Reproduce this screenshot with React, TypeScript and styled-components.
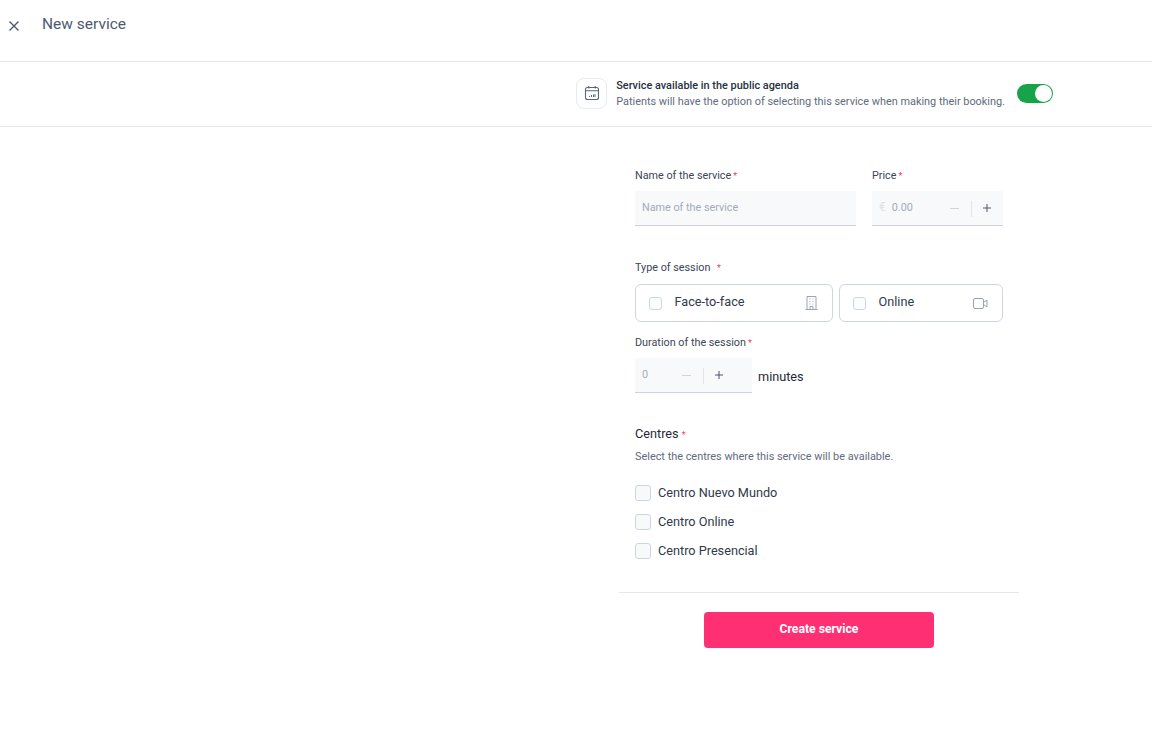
import React from "react";
import styled, { createGlobalStyle } from "styled-components";

const Global = createGlobalStyle`
  html, body { margin: 0; padding: 0; background: #fff; }
  body { font-family: Roboto, "Liberation Sans", sans-serif; color: #1f2937; }
`;

const Page = styled.div`
  width: 1152px;
  height: 732px;
  overflow: hidden;
  display: flex;
  flex-direction: column;
`;

const Header = styled.header`
  height: 62px;
  box-sizing: border-box;
  border-bottom: 1px solid #e3e6ef;
  display: flex;
  align-items: flex-start;
  padding: 14px 0 0 8px;
  gap: 22px;
`;

const CloseButton = styled.span`
  display: flex;
  width: 12px;
  height: 12px;
  margin-top: 6px;
  color: #4a5568;
`;

const Title = styled.h1`
  margin: 0;
  font-size: 15.5px;
  line-height: 20px;
  font-weight: 400;
  color: #4c5a70;
`;

const AgendaBar = styled.section`
  height: 65px;
  box-sizing: border-box;
  border-bottom: 1px solid #e2e6ee;
  padding: 0 99px 2px 0;
  display: flex;
  align-items: center;
  justify-content: flex-end;
`;

const IconTile = styled.div`
  width: 31px;
  height: 31px;
  box-sizing: border-box;
  border: 1px solid #e6eaf2;
  border-radius: 8px;
  display: flex;
  align-items: center;
  justify-content: center;
  color: #5a6578;
  margin-right: 9px;
`;

const AgendaText = styled.div`
  display: flex;
  flex-direction: column;
  gap: 1px;
  margin-right: 12px;
`;

const AgendaTitle = styled.div`
  font-size: 10.9px;
  line-height: 15px;
  font-weight: 500;
  color: #27303f;
`;

const AgendaHint = styled.div`
  font-size: 10.9px;
  line-height: 15px;
  color: #5f6b7e;
`;

const Toggle = styled.div`
  width: 36px;
  height: 19px;
  border-radius: 10px;
  background: #16a34a;
  display: flex;
  align-items: center;
  justify-content: flex-end;
  padding-right: 1px;
  box-sizing: border-box;
`;

const Knob = styled.span`
  width: 17px;
  height: 17px;
  border-radius: 50%;
  background: #fff;
`;

const Main = styled.main`
  display: flex;
  justify-content: flex-start;
  padding-left: 619px;
`;

const Form = styled.form`
  width: 400px;
  display: flex;
  flex-direction: column;
  padding-top: 41px;
`;

const Section = styled.div<{ $mt?: number }>`
  padding: 0 16px;
  margin-top: ${(p) => p.$mt ?? 0}px;
`;

const Row = styled.div<{ $gap: number }>`
  display: flex;
  gap: ${(p) => p.$gap}px;
`;

const Field = styled.div<{ $w: number }>`
  width: ${(p) => p.$w}px;
  display: flex;
  flex-direction: column;
`;

const Label = styled.label<{ $mb: number }>`
  font-size: 10.8px;
  line-height: 16px;
  color: #3b4657;
  margin-bottom: ${(p) => p.$mb}px;
  display: block;
`;

const Star = styled.span<{ $ml?: number }>`
  color: #f0405f;
  font-size: 9px;
  margin-left: ${(p) => p.$ml ?? 2}px;
`;

const InputShell = styled.div<{ $w?: number }>`
  height: 35px;
  width: ${(p) => (p.$w ? `${p.$w}px` : "auto")};
  box-sizing: border-box;
  background: #f8f9fb;
  border-bottom: 1px solid #cdd2dd;
  display: flex;
  align-items: center;
  font-size: 10.8px;
  color: #a3abb9;
  padding-left: 7px;
  padding-bottom: 2px;
`;

const Euro = styled.span`
  color: #dde2ea;
  margin-right: 6px;
  font-size: 12px;
`;

const Value = styled.span`
  flex: 1;
`;

const StepMinus = styled.span`
  width: 9px;
  height: 1px;
  background: #cfd5df;
  margin: 2px 12px 0 0;
`;

const StepDivider = styled.span`
  width: 1px;
  height: 16px;
  background: #e1e5ec;
  margin: 3px 11px 0 0;
`;

const StepPlus = styled.span<{ $mr: number }>`
  display: flex;
  color: #4a5568;
  margin: 2px ${(p) => p.$mr}px 0 0;
`;

const TypeCard = styled.div<{ $w: number }>`
  width: ${(p) => p.$w}px;
  height: 38px;
  box-sizing: border-box;
  border: 1px solid #cdd5e3;
  border-radius: 6px;
  display: flex;
  align-items: center;
  padding: 0 14px 0 13px;
`;

const SmallCheck = styled.span`
  width: 13px;
  height: 13px;
  box-sizing: border-box;
  border: 1px solid #cdd5e3;
  border-radius: 3px;
  background: #fbfcfd;
  margin-right: 12.5px;
  margin-top: 1px;
`;

const TypeName = styled.span`
  flex: 1;
  font-size: 12.7px;
  line-height: 16px;
  color: #2f3a4a;
  margin-top: -2px;
`;

const TypeIcon = styled.span`
  display: flex;
  color: #9aa3b3;
`;

const DurationRow = styled.div`
  display: flex;
  align-items: flex-end;
  gap: 6px;
`;

const Minutes = styled.span`
  font-size: 12.7px;
  line-height: 16px;
  color: #1f2937;
  margin-bottom: 8px;
`;

const CentresTitle = styled.h2`
  margin: 0;
  font-size: 12.7px;
  line-height: 18px;
  font-weight: 400;
  color: #1f2937;
`;

const CentresHint = styled.p`
  margin: 5px 0 0;
  font-size: 10.9px;
  line-height: 16px;
  color: #5f6b7e;
`;

const CheckList = styled.div`
  display: flex;
  flex-direction: column;
  gap: 13px;
  margin-top: 20px;
`;

const CheckRow = styled.div`
  display: flex;
  align-items: center;
  gap: 7px;
  height: 16px;
`;

const Check = styled.span`
  width: 16px;
  height: 16px;
  box-sizing: border-box;
  border: 1px solid #cdd5e3;
  border-radius: 3px;
  background: #f8f9fb;
`;

const CheckText = styled.span`
  font-size: 12.7px;
  line-height: 16px;
  color: #2f3a4a;
`;

const Footer = styled.div`
  margin-top: 33px;
  border-top: 1px solid #e2e6ee;
  padding-top: 19px;
  display: flex;
  justify-content: center;
`;

const Submit = styled.button`
  width: 230px;
  height: 36px;
  border: none;
  border-radius: 4px;
  background: #ff2f73;
  color: #fff;
  font-family: inherit;
  font-size: 12.2px;
  font-weight: 700;
  padding: 0 0 2px;
`;

const Plus = () => (
  <svg width="8" height="8" viewBox="0 0 8 8" fill="none" stroke="currentColor" strokeWidth="1">
    <path d="M4 0v8M0 4h8" />
  </svg>
);

const CalendarIcon = () => (
  <svg width="16" height="16" viewBox="0 0 16 16" fill="none" stroke="currentColor" strokeWidth="1.1">
    <rect x="1.5" y="2.5" width="13" height="12" rx="2" />
    <path d="M1.5 5.8h13M4.8 1v2.6M11.2 1v2.6" />
    <path d="M5.5 12v-1M7.5 12v-2M9.5 12V9.5M11 12V9" strokeWidth="1" />
  </svg>
);

const BuildingIcon = () => (
  <svg width="13" height="14" viewBox="0 0 13 14" fill="none" stroke="currentColor" strokeWidth="1">
    <path d="M2 13.5V.5h9v13M0.5 13.5h12" />
    <path d="M4.5 3h1M7.5 3h1M4.5 5.5h1M7.5 5.5h1M4.5 8h1M7.5 8h1M5 13.5V10.5h3v3" />
  </svg>
);

const VideoIcon = () => (
  <svg width="15" height="11" viewBox="0 0 15 11" fill="none" stroke="currentColor" strokeWidth="1">
    <rect x="0.5" y="0.5" width="10" height="10" rx="1.5" />
    <path d="M10.5 4.5l3.5-2.5v7l-3.5-2.5" />
  </svg>
);

export default function App() {
  return (
    <Page>
      <Global />
      <Header>
        <CloseButton>
          <svg width="12" height="12" viewBox="0 0 12 12" fill="none" stroke="currentColor" strokeWidth="1.3">
            <path d="M1.5 1.5l9 9M10.5 1.5l-9 9" />
          </svg>
        </CloseButton>
        <Title>New service</Title>
      </Header>
      <AgendaBar>
        <IconTile>
          <CalendarIcon />
        </IconTile>
        <AgendaText>
          <AgendaTitle>Service available in the public agenda</AgendaTitle>
          <AgendaHint>Patients will have the option of selecting this service when making their booking.</AgendaHint>
        </AgendaText>
        <Toggle>
          <Knob />
        </Toggle>
      </AgendaBar>
      <Main>
        <Form>
          <Section>
            <Row $gap={16}>
              <Field $w={221}>
                <Label $mb={7}>Name of the service<Star>*</Star></Label>
                <InputShell>Name of the service</InputShell>
              </Field>
              <Field $w={131}>
                <Label $mb={7}>Price<Star>*</Star></Label>
                <InputShell>
                  <Euro>€</Euro>
                  <Value>0.00</Value>
                  <StepMinus />
                  <StepDivider />
                  <StepPlus $mr={12}><Plus /></StepPlus>
                </InputShell>
              </Field>
            </Row>
          </Section>
          <Section $mt={34}>
            <Label $mb={8}>Type of session <Star $ml={4}>*</Star></Label>
            <Row $gap={6}>
              <TypeCard $w={198}>
                <SmallCheck />
                <TypeName>Face-to-face</TypeName>
                <TypeIcon><BuildingIcon /></TypeIcon>
              </TypeCard>
              <TypeCard $w={164}>
                <SmallCheck />
                <TypeName>Online</TypeName>
                <TypeIcon><VideoIcon /></TypeIcon>
              </TypeCard>
            </Row>
          </Section>
          <Section $mt={13}>
            <Label $mb={7}>Duration of the session<Star>*</Star></Label>
            <DurationRow>
              <InputShell $w={117}>
                <Value>0</Value>
                <StepMinus />
                <StepDivider />
                <StepPlus $mr={29}><Plus /></StepPlus>
              </InputShell>
              <Minutes>minutes</Minutes>
            </DurationRow>
          </Section>
          <Section $mt={32}>
            <CentresTitle>Centres <Star $ml={0}>*</Star></CentresTitle>
            <CentresHint>Select the centres where this service will be available.</CentresHint>
            <CheckList>
              <CheckRow><Check /><CheckText>Centro Nuevo Mundo</CheckText></CheckRow>
              <CheckRow><Check /><CheckText>Centro Online</CheckText></CheckRow>
              <CheckRow><Check /><CheckText>Centro Presencial</CheckText></CheckRow>
            </CheckList>
          </Section>
          <Footer>
            <Submit type="button">Create service</Submit>
          </Footer>
        </Form>
      </Main>
    </Page>
  );
}
